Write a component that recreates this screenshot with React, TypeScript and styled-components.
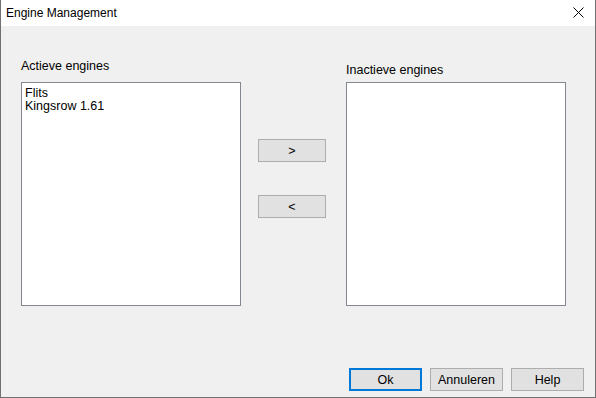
import styled, { createGlobalStyle } from 'styled-components';

const GlobalStyle = createGlobalStyle`
  html, body {
    margin: 0;
    padding: 0;
    background: #f0f0f0;
  }
  * {
    box-sizing: border-box;
  }
`;

function CloseIcon() {
  return (
    <svg width="11" height="11" viewBox="0 0 11 11">
      <path d="M0.5 0.5 L10.5 10.5 M10.5 0.5 L0.5 10.5" stroke="#000" strokeWidth="1" />
    </svg>
  );
}

function App() {
  const activeEngines = ['Flits', 'Kingsrow 1.61'];
  const inactiveEngines: string[] = [];

  return (
    <Window>
      <GlobalStyle />
      <TitleBar>
        <Title>Engine Management</Title>
        <CloseButton>
          <CloseIcon />
        </CloseButton>
      </TitleBar>
      <Body>
        <Columns>
          <Column>
            <Label $drop={0}>Actieve engines</Label>
            <ListBox>
              {activeEngines.map((name) => (
                <ListItem key={name}>{name}</ListItem>
              ))}
            </ListBox>
          </Column>
          <MoveButtons>
            <Button>&gt;</Button>
            <Button>&lt;</Button>
          </MoveButtons>
          <Column>
            <Label $drop={4}>Inactieve engines</Label>
            <ListBox>
              {inactiveEngines.map((name) => (
                <ListItem key={name}>{name}</ListItem>
              ))}
            </ListBox>
          </Column>
        </Columns>
        <Footer>
          <Button $primary>Ok</Button>
          <Button>Annuleren</Button>
          <Button>Help</Button>
        </Footer>
      </Body>
    </Window>
  );
}

export default App;

const Window = styled.div`
  width: 596px;
  height: 398px;
  display: flex;
  flex-direction: column;
  border: 1px solid #707070;
  border-top: none;
  background: #f0f0f0;
  font-family: 'Liberation Sans', Arial, sans-serif;
  font-size: 12.5px;
  color: #000;
`;

const TitleBar = styled.div`
  height: 26px;
  flex-shrink: 0;
  display: flex;
  align-items: center;
  justify-content: space-between;
  background: #fff;
  padding-left: 5px;
`;

const Title = styled.div`
  font-size: 12px;
  padding-bottom: 1px;
`;

const CloseButton = styled.div`
  width: 32px;
  height: 26px;
  display: flex;
  align-items: center;
  justify-content: center;
  margin-right: 1px;
  padding-bottom: 1px;
`;

const Body = styled.div`
  flex: 1;
  display: flex;
  flex-direction: column;
  justify-content: space-between;
  padding: 33px 11px 6px 20px;
`;

const Columns = styled.div`
  display: flex;
  align-items: flex-start;
`;

const Column = styled.div`
  display: flex;
  flex-direction: column;
`;

const Label = styled.div<{ $drop: number }>`
  height: 23px;
  line-height: 14px;
  padding-top: ${(p) => p.$drop}px;
`;

const ListBox = styled.div`
  width: 220px;
  height: 224px;
  background: #fff;
  border: 1px solid #828790;
  padding: 4px 3px;
  display: flex;
  flex-direction: column;
`;

const ListItem = styled.div`
  height: 13px;
  line-height: 13px;
`;

const MoveButtons = styled.div`
  display: flex;
  flex-direction: column;
  gap: 33px;
  padding: 80px 20px 0 17px;
`;

const Button = styled.div<{ $primary?: boolean }>`
  width: ${(p) => (p.$primary ? 73 : 68)}px;
  height: 23px;
  display: flex;
  align-items: center;
  justify-content: center;
  background: #e1e1e1;
  border: ${(p) => (p.$primary ? '2px solid #0078d7' : '1px solid #adadad')};
  font-size: 12.5px;
  cursor: default;
`;

const Footer = styled.div`
  display: flex;
  justify-content: flex-end;
  gap: 8px;

  & > div {
    width: 73px;
  }
`;
